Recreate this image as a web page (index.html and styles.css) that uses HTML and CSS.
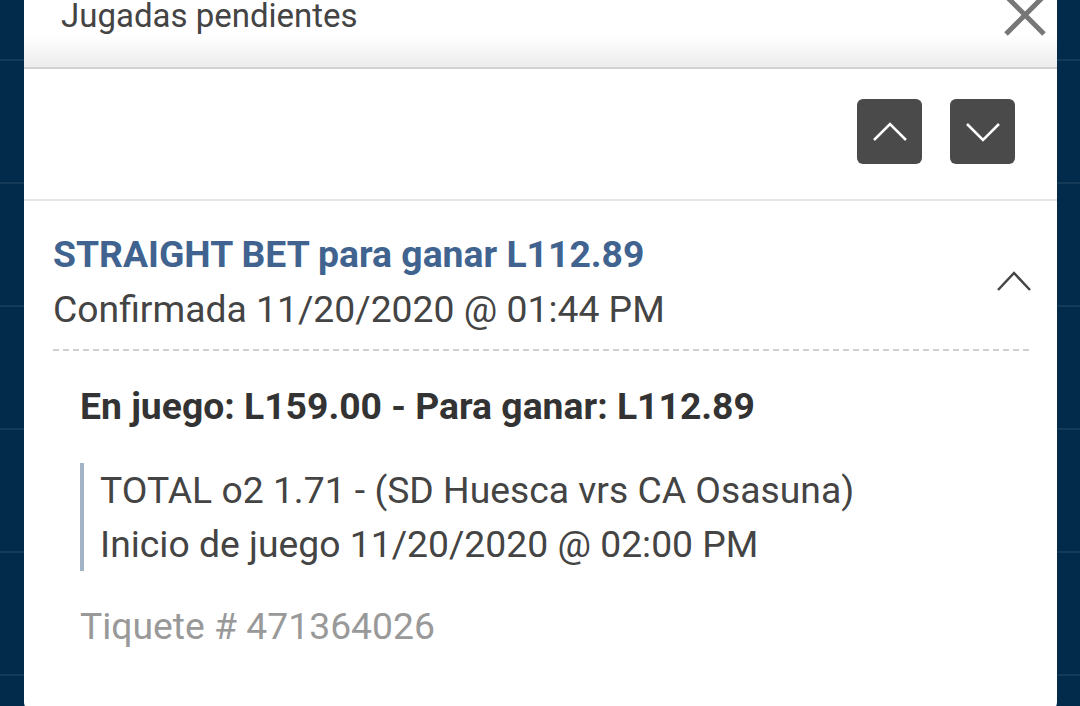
FILE: index.html
```html
<!DOCTYPE html>
<html lang="es">

<head>
    <meta charset="UTF-8">
    <meta name="viewport" content="width=device-width, initial-scale=1.0">
    <title>Jugadas pendientes</title>
    <link rel="stylesheet" href="styles.css">
</head>

<body>
    <div class="modal">
        <div class="modalHeader">
            <h2 class="modalTitle">Jugadas pendientes</h2>
            <span class="closeBtn">
                <svg width="44" height="44" viewBox="0 0 44 44">
                    <path d="M3 3 L41 41 M41 3 L3 41" stroke="#777" stroke-width="5" fill="none" />
                </svg>
            </span>
        </div>

        <div class="toolbar">
            <button class="navBtn" type="button">
                <svg width="34" height="20" viewBox="0 0 34 20">
                    <path d="M1 18 L17 2 L33 18" stroke="#fff" stroke-width="2.5" fill="none" />
                </svg>
            </button>
            <button class="navBtn" type="button">
                <svg width="34" height="20" viewBox="0 0 34 20">
                    <path d="M1 2 L17 18 L33 2" stroke="#fff" stroke-width="2.5" fill="none" />
                </svg>
            </button>
        </div>

        <div class="bet">
            <div class="betHead">
                <div>
                    <div class="betTitle">STRAIGHT BET para ganar L112.89</div>
                    <div class="betDate">Confirmada 11/20/2020 @ 01:44 PM</div>
                </div>
                <svg class="betToggle" width="36" height="22" viewBox="0 0 36 22">
                    <path d="M2 20 L18 3 L34 20" stroke="#444" stroke-width="2.5" fill="none" />
                </svg>
            </div>
            <div class="betBody">
                <div class="betAmount">En juego: L159.00 - Para ganar: L112.89</div>
                <div class="betLine">
                    <div>TOTAL o2 1.71 - (SD Huesca vrs CA Osasuna)</div>
                    <div>Inicio de juego 11/20/2020 @ 02:00 PM</div>
                </div>
                <div class="ticket">Tiquete # 471364026</div>
            </div>
        </div>
    </div>
</body>

</html>
```

FILE: styles.css
```css
* {
    margin: 0;
    padding: 0;
    box-sizing: border-box;
}

html,
body {
    width: 100%;
    height: 100%;
}

body {
    font-family: Roboto, "Liberation Sans", sans-serif;
    overflow: hidden;
    background-color: #022b4b;
    /* rows of the page behind the dialog */
    background-image: repeating-linear-gradient(to bottom,
            transparent 0 59px,
            rgba(255, 255, 255, 0.07) 59px 61px,
            transparent 61px 123px);
}

.modal {
    margin: 0 23px 0 24px;
    height: 712px;
    background-color: #fff;
    border-radius: 0 0 10px 10px;
    overflow: hidden;
}

.modalHeader {
    height: 69px;
    padding: 0 10px 0 37px;
    display: flex;
    justify-content: space-between;
    align-items: flex-start;
    background: linear-gradient(to bottom, #fff 0, #fff 36px, #ececec 67px);
    border-bottom: 2px solid #d2d2d2;
}

.modalTitle {
    font-size: 33px;
    font-weight: 400;
    color: #444;
    line-height: 32px;
}

.closeBtn {
    margin-top: -7px;
    display: block;
}

.toolbar {
    height: 132px;
    display: flex;
    justify-content: flex-end;
    gap: 28px;
    padding: 30px 42px 0 0;
    border-bottom: 2px solid #e6e6e6;
}

.navBtn {
    width: 65px;
    height: 65px;
    border: 0;
    border-radius: 6px;
    background-color: #4a4a4a;
    display: flex;
    align-items: center;
    justify-content: center;
}

.bet {
    padding: 26px 28px 0 29px;
}

.betHead {
    display: flex;
    justify-content: space-between;
    align-items: center;
    padding-bottom: 14px;
    /* dashed rule under the header */
    background-image: linear-gradient(to right, #cfcfcf 0 6px, transparent 6px 10px);
    background-size: 10px 2px;
    background-repeat: repeat-x;
    background-position: left bottom;
}

.betTitle {
    font-size: 37.3px;
    font-weight: 700;
    color: #40648f;
    line-height: 55px;
}

.betDate {
    font-size: 37.3px;
    color: #444;
    line-height: 55px;
}

.betToggle {
    margin-right: -3px;
    margin-top: -2px;
}

.betBody {
    padding: 28px 0 0 27px;
}

.betAmount {
    font-size: 37.3px;
    font-weight: 700;
    color: #333;
    line-height: 55px;
}

.betLine {
    margin-top: 29px;
    border-left: 4px solid #a3b3c6;
    padding-left: 16px;
    font-size: 37.3px;
    color: #444;
    line-height: 54px;
}

.ticket {
    margin-top: 28px;
    font-size: 37.3px;
    color: #999;
    line-height: 55px;
}
```
